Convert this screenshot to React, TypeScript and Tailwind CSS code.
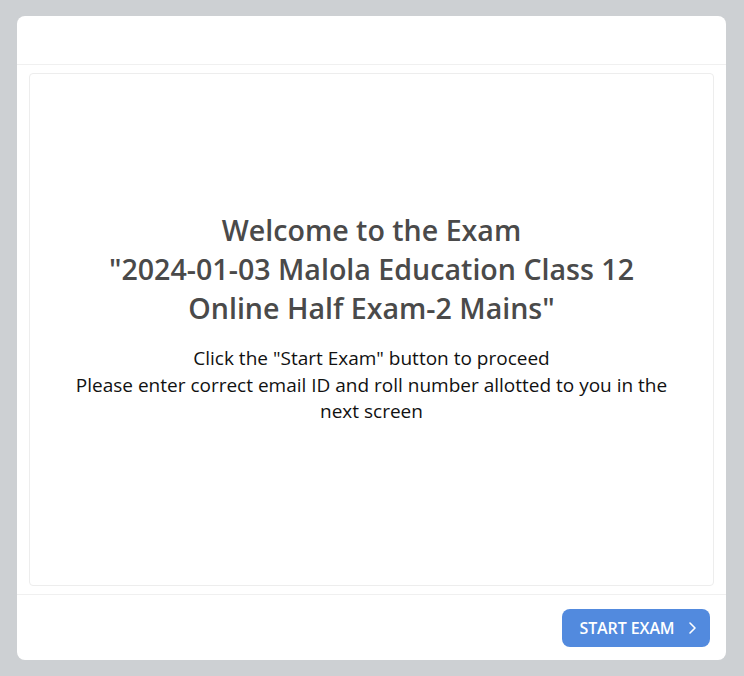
export default function App() {
  return (
    <div className="min-h-screen w-full bg-[#cdd0d3] px-[17px] pt-[16px] pb-[16px] font-['Open_Sans',sans-serif]">
      <div className="flex h-[644px] w-[709px] flex-col rounded-lg bg-white">
        {/* header */}
        <div className="h-[49px] shrink-0 border-b border-[#f0f0f0]" />

        {/* body */}
        <div className="flex flex-1 px-3 py-2">
          <div className="flex flex-1 flex-col items-center justify-center rounded border border-[#ededed] pb-[24px]">
            <h1 className="text-center text-[28.6px] font-semibold leading-[39px] text-[#4a4a4a]">
              Welcome to the Exam
              <br />
              "2024-01-03 Malola Education Class 12
              <br />
              Online Half Exam-2 Mains"
            </h1>
            <p className="mt-[18px] px-8 text-center text-[19px] leading-[26.5px] text-[#111]">
              Click the "Start Exam" button to proceed
              <br />
              Please enter correct email ID and roll number allotted to you in the next screen
            </p>
          </div>
        </div>

        {/* footer */}
        <div className="flex h-[66px] shrink-0 items-center justify-end border-t border-[#f0f0f0] px-4">
          <button className="flex h-[38px] w-[148px] items-center justify-center gap-3 rounded-lg bg-[#528ade] pl-1 text-[16px] font-semibold tracking-[-0.1px] text-white">
            START EXAM
            <svg width="10" height="14" viewBox="0 0 10 14" fill="none" stroke="white" strokeWidth="1.6" strokeLinecap="round" strokeLinejoin="round">
              <path d="M3 2l5 5-5 5" />
            </svg>
          </button>
        </div>
      </div>
    </div>
  );
}
